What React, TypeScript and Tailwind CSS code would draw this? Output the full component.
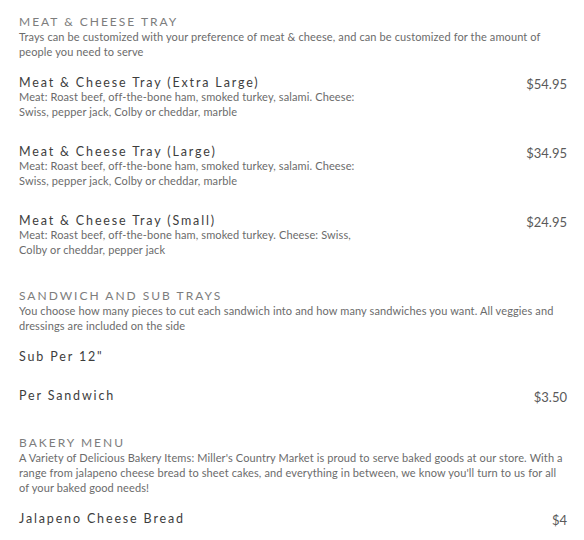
import React from 'react';

type Item = { name: string; desc?: string; price?: string };
type Section = { title: string; desc: string; items: Item[] };

const MENU: Section[] = [
  {
    title: 'MEAT & CHEESE TRAY',
    desc: 'Trays can be customized with your preference of meat & cheese, and can be customized for the amount of people you need to serve',
    items: [
      {
        name: 'Meat & Cheese Tray (Extra Large)',
        desc: 'Meat: Roast beef, off-the-bone ham, smoked turkey, salami. Cheese: Swiss, pepper jack, Colby or cheddar, marble',
        price: '$54.95',
      },
      {
        name: 'Meat & Cheese Tray (Large)',
        desc: 'Meat: Roast beef, off-the-bone ham, smoked turkey, salami. Cheese: Swiss, pepper jack, Colby or cheddar, marble',
        price: '$34.95',
      },
      {
        name: 'Meat & Cheese Tray (Small)',
        desc: 'Meat: Roast beef, off-the-bone ham, smoked turkey. Cheese: Swiss, Colby or cheddar, pepper jack',
        price: '$24.95',
      },
    ],
  },
  {
    title: 'SANDWICH AND SUB TRAYS',
    desc: 'You choose how many pieces to cut each sandwich into and how many sandwiches you want. All veggies and dressings are included on the side',
    items: [{ name: 'Sub Per 12"' }, { name: 'Per Sandwich', price: '$3.50' }],
  },
  {
    title: 'BAKERY MENU',
    desc: "A Variety of Delicious Bakery Items: Miller's Country Market is proud to serve baked goods at our store. With a range from jalapeno cheese bread to sheet cakes, and everything in between, we know you'll turn to us for all of your baked good needs!",
    items: [{ name: 'Jalapeno Cheese Bread', price: '$4' }],
  },
];

const MenuItem: React.FC<{ item: Item }> = ({ item }) => (
  <div className="flex items-start justify-between">
    <div className="w-[350px]">
      <h3 className="text-[12.5px] leading-[13px] tracking-[1.85px] text-[#3d3d3d]">{item.name}</h3>
      {item.desc && (
        <p className="text-[11px] leading-[15px] tracking-[0.12px] text-[#6b6b6b]">{item.desc}</p>
      )}
    </div>
    {item.price && <span className="mt-[2px] text-[13px] leading-[13px] text-[#5a5a5a]">{item.price}</span>}
  </div>
);

export default function App() {
  return (
    <div
      className="min-h-screen w-[584px] bg-white pt-[14px] pl-[19px] pr-[17px]"
      style={{ fontFamily: 'Lato, "Open Sans", sans-serif' }}
    >
      <div className="flex flex-col gap-[31px]">
        {MENU.map((section) => (
          <section key={section.title}>
            <h2 className="text-[12px] leading-[15px] tracking-[2px] text-[#7d7d7d]">{section.title}</h2>
            <p className="text-[11px] leading-[15px] tracking-[0.12px] text-[#6b6b6b]">{section.desc}</p>
            <div className="mt-[17px] flex flex-col gap-[26px]">
              {section.items.map((item) => (
                <MenuItem key={item.name} item={item} />
              ))}
            </div>
          </section>
        ))}
      </div>
    </div>
  );
}
